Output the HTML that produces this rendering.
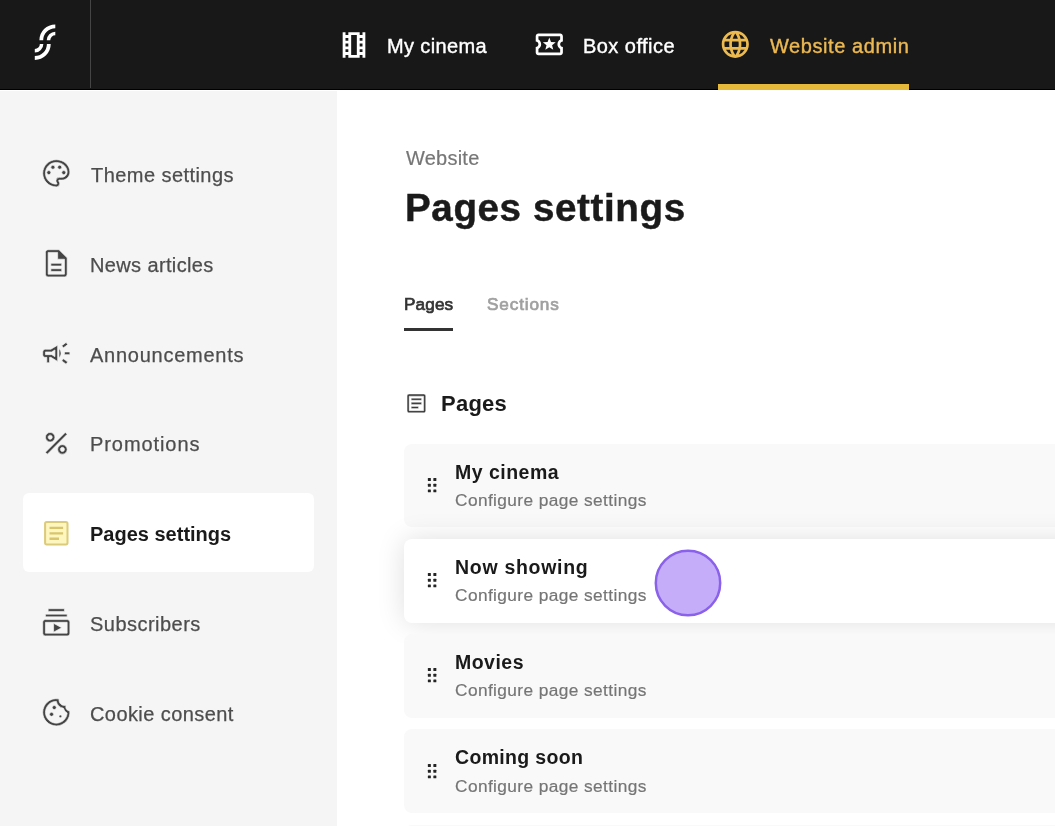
<!DOCTYPE html>
<html lang="en">
<head>
<meta charset="utf-8">
<title>Pages settings</title>
<style>
*{box-sizing:border-box;margin:0;padding:0}
html,body{width:1055px;height:826px;overflow:hidden;background:#fff}
body{position:relative;font-family:"Liberation Sans",sans-serif;color:#1a1a1a}
.t{position:absolute;white-space:nowrap;line-height:1;will-change:transform}
svg{position:absolute;display:block;overflow:visible}
#hdr{position:absolute;left:0;top:0;width:1055px;height:89.7px;background:#181818;border-bottom:1.2px solid #000}
#hdr .div{position:absolute;left:90px;top:0;width:1px;height:88px;background:#454545}
.nav{color:#fff;-webkit-text-stroke:.4px #fff}
.nav.act{color:#ecb852;-webkit-text-stroke:.4px #ecb852}
#uline{position:absolute;left:718px;top:84px;width:191px;height:5.7px;background:#e6b93b}
#side{position:absolute;left:0;top:91px;width:337px;height:735px;background:#f5f5f5}
#actbg{position:absolute;left:22.5px;top:493.1px;width:291.5px;height:79.2px;background:#fff;border-radius:6px}
.sb{color:#4d4d4d;-webkit-text-stroke:.25px #4d4d4d}
.sb.b{font-weight:bold;color:#1a1a1a;-webkit-text-stroke:0}
.crumb{color:#767676;-webkit-text-stroke:.2px #767676}
h1.t{font-weight:bold;color:#1a1a1a;-webkit-text-stroke:.45px #1a1a1a}
.tab{color:#333;-webkit-text-stroke:.7px #333}
.tab.off{color:#a0a0a0;-webkit-text-stroke:.7px #a0a0a0}
#tabline{position:absolute;left:404.3px;top:327.8px;width:48.8px;height:3.1px;background:#333}
h2.t{font-weight:bold;color:#1a1a1a}
.card{position:absolute;left:404.3px;width:700px;height:83.7px;background:#f9f9f9;border-radius:8px}
.card.hov{background:#fff;box-shadow:0 0 28px rgba(0,0,0,.13)}
.ct{font-weight:bold;color:#1a1a1a}
.cs{color:#757575;-webkit-text-stroke:.2px #757575}
</style>
</head>
<body>

<header>
<div id="hdr"><div class="div"></div></div>
<div id="uline"></div>
<svg id="logo" viewBox="30 20 30 45" width="30" height="45" style="left:30px;top:20px" fill="none" stroke="#fff" stroke-width="3.8"><path d="M55.3 26.3A14 14 0 0 0 41.3 40.3"/><path d="M55.3 33.5A6.8 6.8 0 0 0 48.500 40.3" stroke-width="3.5"/><path d="M34.8 58A14 14 0 0 0 48.8 44"/><path d="M34.8 50.8A6.8 6.8 0 0 0 41.6 44" stroke-width="3.5"/></svg>
<svg viewBox="0 0 24 24" width="34" height="34" style="left:336.7px;top:28.05px" fill="#fff"><path d="M18 3v2h-2V3H8v2H6V3H4v18h2v-2h2v2h8v-2h2v2h2V3h-2zM8 17H6v-2h2v2zm0-4H6v-2h2v2zm0-4H6V7h2v2zm6 10h-4V5h4v14zm4-2h-2v-2h2v2zm0-4h-2v-2h2v2zm0-4h-2V7h2v2z"/></svg>
<svg viewBox="0 0 24 24" width="32.6" height="32.6" style="left:532.8px;top:28.2px" fill="#fff"><path d="M22 10V6c0-1.110-.9-2-2-2H4c-1.100 0-1.990.890-1.990 2v4c1.100 0 1.990.9 1.990 2s-.890 2-2 2v4c0 1.100.9 2 2 2h16c1.100 0 2-.9 2-2v-4c-1.100 0-2-.9-2-2s.9-2 2-2zm-2-1.460c-1.190.690-2 1.990-2 3.460s.810 2.770 2 3.460V18H4v-2.540c1.190-.69 2-1.990 2-3.460 0-1.480-.8-2.770-1.990-3.460L4 6h16v2.540zM9.070 16 12 14.120 14.930 16l-.890-3.360 2.690-2.200-3.470-.21L12 7l-1.270 3.220-3.470.21 2.690 2.200z"/></svg>
<svg viewBox="0 0 24 24" width="32.6" height="32.6" style="left:719px;top:27.8px" fill="#edba50"><path d="M11.990 2C6.470 2 2 6.480 2 12s4.470 10 9.990 10C17.520 22 22 17.520 22 12S17.520 2 11.990 2zm6.930 6h-2.950a15.650 15.650 0 0 0-1.380-3.560A8.030 8.030 0 0 1 18.920 8zM12 4.040c.83 1.200 1.480 2.530 1.910 3.960h-3.820c.43-1.430 1.080-2.760 1.910-3.960zM4.260 14C4.100 13.360 4 12.690 4 12s.1-1.360.26-2h3.380c-.08.660-.14 1.320-.14 2 0 .68.060 1.340.14 2H4.260zm.82 2h2.950c.32 1.250.78 2.450 1.380 3.560A7.987 7.987 0 0 1 5.080 16zm2.950-8H5.080a7.987 7.987 0 0 1 4.330-3.560A15.650 15.650 0 0 0 8.030 8zM12 19.960c-.83-1.200-1.480-2.530-1.910-3.960h3.820c-.43 1.430-1.080 2.760-1.910 3.960zM14.340 14H9.660c-.09-.66-.16-1.320-.16-2 0-.68.070-1.350.16-2h4.680c.09.65.16 1.320.16 2 0 .68-.07 1.340-.16 2zm.25 5.560c.6-1.110 1.060-2.310 1.380-3.560h2.950a8.030 8.030 0 0 1-4.330 3.560zM16.360 14c.08-.66.14-1.320.14-2 0-.68-.06-1.340-.14-2h3.380c.16.640.26 1.310.26 2s-.1 1.360-.26 2h-3.380z"/></svg>
<div class="t nav " style="left:387.2px;top:36.07px;font-size:20px;letter-spacing:0.36px">My cinema</div>
<div class="t nav " style="left:583px;top:36.07px;font-size:20px;letter-spacing:0.45px">Box office</div>
<div class="t nav act" style="left:770px;top:36.07px;font-size:20px;letter-spacing:0.58px">Website admin</div>
</header>
<aside>
<div id="side"></div><div id="actbg"></div>
<svg viewBox="0 0 24 24" width="32.6" height="32.6" style="left:40px;top:157.4px" fill="#444" stroke="#f5f5f5" stroke-width="0.5"><path d="M12 22C6.490 22 2 17.510 2 12S6.490 2 12 2s10 4.040 10 9c0 3.310-2.690 6-6 6h-1.770c-.28 0-.5.220-.5.500 0 .120.050.230.130.330.410.470.640 1.060.640 1.670A2.500 2.500 0 0 1 12 22zm0-18c-4.410 0-8 3.590-8 8s3.590 8 8 8c.28 0 .5-.22.5-.5a.54.54 0 0 0-.14-.35c-.41-.46-.63-1.050-.63-1.650a2.500 2.500 0 0 1 2.500-2.500H16c2.210 0 4-1.790 4-4 0-3.860-3.590-7-8-7z"/><circle cx="6.500" cy="11.500" r="1.500"/><circle cx="9.500" cy="7.500" r="1.500"/><circle cx="14.500" cy="7.500" r="1.500"/><circle cx="17.500" cy="11.500" r="1.500"/></svg>
<div class="t sb " style="left:91px;top:165.07px;font-size:20px;letter-spacing:0.44px">Theme settings</div>
<svg viewBox="0 0 24 24" width="32.6" height="32.6" style="left:40px;top:247.16px" fill="#444" stroke="#f5f5f5" stroke-width="0.5"><path d="M8 16h8v2H8zm0-4h8v2H8zm6-10H6c-1.100 0-2 .9-2 2v16c0 1.100.890 2 1.990 2H18c1.100 0 2-.9 2-2V8l-6-6zm4 18H6V4h7v5h5v11z"/></svg>
<div class="t sb " style="left:90px;top:254.83px;font-size:20px;letter-spacing:0.37px">News articles</div>
<svg viewBox="0 0 24 24" width="32.6" height="32.6" style="left:40px;top:336.92px" fill="#444" stroke="#f5f5f5" stroke-width="0.5"><path d="M18 11v2h4v-2h-4zm-2 6.610c.96.710 2.210 1.650 3.200 2.390.4-.53.8-1.070 1.200-1.600-.99-.74-2.240-1.680-3.200-2.400-.4.540-.8 1.080-1.200 1.610zM20.400 5.600c-.4-.53-.8-1.070-1.200-1.600-.99.740-2.240 1.680-3.200 2.400.4.530.8 1.070 1.200 1.600.96-.72 2.210-1.650 3.200-2.400zM4 9c-1.100 0-2 .9-2 2v2c0 1.100.9 2 2 2h1v4h2v-4h1l5 3V6L8 9H4zm5.030 1.710L11 9.530v4.940l-1.970-1.180-.480-.290H4v-2h4.550l.48-.29zM15.500 12c0-1.330-.58-2.530-1.500-3.350v6.690c.92-.81 1.500-2.010 1.500-3.340z"/></svg>
<div class="t sb " style="left:90px;top:344.59px;font-size:20px;letter-spacing:0.75px">Announcements</div>
<svg viewBox="0 0 24 24" width="32.6" height="32.6" style="left:40px;top:426.68px" fill="#444" stroke="#f5f5f5" stroke-width="0.5"><path d="M7.500 4C5.570 4 4 5.570 4 7.500S5.570 11 7.500 11 11 9.430 11 7.500 9.430 4 7.500 4zm0 5C6.670 9 6 8.330 6 7.500S6.670 6 7.500 6 9 6.670 9 7.500 8.330 9 7.500 9zM16.500 13c-1.930 0-3.500 1.570-3.500 3.500s1.570 3.500 3.500 3.500 3.500-1.570 3.500-3.500-1.570-3.500-3.500-3.500zm0 5c-.83 0-1.500-.67-1.500-1.500s.67-1.500 1.500-1.500 1.500.67 1.500 1.500-.67 1.500-1.500 1.500zM5.410 20 4 18.590 18.590 4 20 5.410 5.410 20z"/></svg>
<div class="t sb " style="left:90px;top:434.35px;font-size:20px;letter-spacing:0.92px">Promotions</div>
<svg viewBox="0 0 24 24" width="32.6" height="32.6" style="left:39.5px;top:516.54px" fill="none"><rect x="3.75" y="3.75" width="16.5" height="16.5" rx="1.2" fill="#fdf6bf" stroke="#dccb7a" stroke-width="1.5"/><path d="M7 8h10M7 12h10M7 16h7" fill="none" stroke="#d8c66e" stroke-width="1.7"/></svg>
<div class="t sb b" style="left:89.7px;top:524.11px;font-size:20px">Pages settings</div>
<svg viewBox="0 0 24 24" width="32.6" height="32.6" style="left:40px;top:606.2px" fill="#444" stroke="#f5f5f5" stroke-width="0.5"><path d="M4 6h16v2H4zm2-4h12v2H6zm14 8H4c-1.100 0-2 .9-2 2v8c0 1.100.9 2 2 2h16c1.100 0 2-.9 2-2v-8c0-1.100-.9-2-2-2zm0 10H4v-8h16v8zm-10-7.270v6.530L16 16z"/></svg>
<div class="t sb " style="left:90px;top:613.87px;font-size:20px;letter-spacing:0.47px">Subscribers</div>
<svg viewBox="0 0 24 24" width="32.6" height="32.6" style="left:40px;top:695.96px" fill="#444" stroke="#f5f5f5" stroke-width="0.5"><circle cx="10.500" cy="8.500" r="1.500"/><circle cx="8.500" cy="13.500" r="1.500"/><circle cx="15" cy="15" r="1"/><path d="M21.950 10.990c-1.790-.03-3.700-1.950-2.680-4.220-2.970 1-5.780-1.590-5.190-4.560C7.110.74 2 6.410 2 12c0 5.520 4.480 10 10 10 5.890 0 10.540-5.080 9.950-11.010zM12 20c-4.410 0-8-3.590-8-8 0-3.310 2.730-8.180 8.080-8.020.42 2.540 2.440 4.560 4.990 4.940.7.360.52 2.550 2.920 3.630C19.700 16.860 16.060 20 12 20z"/></svg>
<div class="t sb " style="left:90px;top:703.63px;font-size:20px;letter-spacing:0.42px">Cookie consent</div>
</aside>
<main>
<div class="t crumb" style="left:405.5px;top:147.97px;font-size:20px;letter-spacing:0.23px">Website</div>
<h1 class="t" style="left:405.3px;top:189.33px;font-size:38.6px;letter-spacing:0.6px">Pages settings</h1>
<div class="t tab" style="left:403.6px;top:296.14px;font-size:17.2px;letter-spacing:0.1px">Pages</div>
<div class="t tab off" style="left:487.2px;top:296.14px;font-size:17.2px;letter-spacing:0.85px">Sections</div>
<div id="tabline"></div>
<svg viewBox="0 0 24 24" width="24.8" height="24.8" style="left:404.4px;top:391.35px" fill="#3a3a3a" stroke="#fff" stroke-width="0.4"><path d="M19 5v14H5V5h14m0-2H5c-1.100 0-2 .9-2 2v14c0 1.100.9 2 2 2h14c1.100 0 2-.9 2-2V5c0-1.100-.9-2-2-2z"/><path d="M14 17H7v-2h7v2zm3-4H7v-2h10v2zm0-4H7V7h10v2z"/></svg>
<h2 class="t" style="left:440.6px;top:393.38px;font-size:22px;letter-spacing:0.25px">Pages</h2>
<div class="card" style="top:443.7px"></div>
<div class="card hov" style="top:538.9px"></div>
<div class="card" style="top:634.1px"></div>
<div class="card" style="top:729.3px"></div>
<div class="card" style="top:824.5px"></div>
<svg viewBox="0 0 11 17" width="11" height="17" style="left:427px;top:477px" fill="#242424"><rect x="0.85" y="1.1" width="3" height="2.9" rx=".5"/><rect x="6.35" y="1.1" width="3" height="2.9" rx=".5"/><rect x="0.85" y="6.75" width="3" height="2.9" rx=".5"/><rect x="6.35" y="6.75" width="3" height="2.9" rx=".5"/><rect x="0.85" y="12.4" width="3" height="2.9" rx=".5"/><rect x="6.35" y="12.4" width="3" height="2.9" rx=".5"/></svg>
<div class="t ct" style="left:454.5px;top:462.79px;font-size:19.5px;letter-spacing:0.48px">My cinema</div>
<div class="t cs" style="left:455.4px;top:491.96px;font-size:17.3px;letter-spacing:0.4px">Configure page settings</div>
<svg viewBox="0 0 11 17" width="11" height="17" style="left:427px;top:572.2px" fill="#242424"><rect x="0.85" y="1.1" width="3" height="2.9" rx=".5"/><rect x="6.35" y="1.1" width="3" height="2.9" rx=".5"/><rect x="0.85" y="6.75" width="3" height="2.9" rx=".5"/><rect x="6.35" y="6.75" width="3" height="2.9" rx=".5"/><rect x="0.85" y="12.4" width="3" height="2.9" rx=".5"/><rect x="6.35" y="12.4" width="3" height="2.9" rx=".5"/></svg>
<div class="t ct" style="left:454.5px;top:557.99px;font-size:19.5px;letter-spacing:0.7px">Now showing</div>
<div class="t cs" style="left:455.4px;top:587.16px;font-size:17.3px;letter-spacing:0.4px">Configure page settings</div>
<svg viewBox="0 0 11 17" width="11" height="17" style="left:427px;top:667.4px" fill="#242424"><rect x="0.85" y="1.1" width="3" height="2.9" rx=".5"/><rect x="6.35" y="1.1" width="3" height="2.9" rx=".5"/><rect x="0.85" y="6.75" width="3" height="2.9" rx=".5"/><rect x="6.35" y="6.75" width="3" height="2.9" rx=".5"/><rect x="0.85" y="12.4" width="3" height="2.9" rx=".5"/><rect x="6.35" y="12.4" width="3" height="2.9" rx=".5"/></svg>
<div class="t ct" style="left:454.5px;top:653.19px;font-size:19.5px;letter-spacing:0.48px">Movies</div>
<div class="t cs" style="left:455.4px;top:682.36px;font-size:17.3px;letter-spacing:0.4px">Configure page settings</div>
<svg viewBox="0 0 11 17" width="11" height="17" style="left:427px;top:762.6px" fill="#242424"><rect x="0.85" y="1.1" width="3" height="2.9" rx=".5"/><rect x="6.35" y="1.1" width="3" height="2.9" rx=".5"/><rect x="0.85" y="6.75" width="3" height="2.9" rx=".5"/><rect x="6.35" y="6.75" width="3" height="2.9" rx=".5"/><rect x="0.85" y="12.4" width="3" height="2.9" rx=".5"/><rect x="6.35" y="12.4" width="3" height="2.9" rx=".5"/></svg>
<div class="t ct" style="left:454.5px;top:748.39px;font-size:19.5px;letter-spacing:0.34px">Coming soon</div>
<div class="t cs" style="left:455.4px;top:777.56px;font-size:17.3px;letter-spacing:0.4px">Configure page settings</div>
<svg viewBox="0 0 11 17" width="11" height="17" style="left:427px;top:857.8px" fill="#242424"><rect x="0.85" y="1.1" width="3" height="2.9" rx=".5"/><rect x="6.35" y="1.1" width="3" height="2.9" rx=".5"/><rect x="0.85" y="6.75" width="3" height="2.9" rx=".5"/><rect x="6.35" y="6.75" width="3" height="2.9" rx=".5"/><rect x="0.85" y="12.4" width="3" height="2.9" rx=".5"/><rect x="6.35" y="12.4" width="3" height="2.9" rx=".5"/></svg>
<div class="t ct" style="left:454.5px;top:843.59px;font-size:19.5px;letter-spacing:0.48px">Events</div>
<div class="t cs" style="left:455.4px;top:872.76px;font-size:17.3px;letter-spacing:0.4px">Configure page settings</div>
<svg id="click" viewBox="0 0 70 70" width="70" height="70" style="left:653.2px;top:547.8px"><circle cx="35" cy="35" r="32.2" fill="#c5adfa" stroke="#8a61ea" stroke-width="2.5"/></svg>
</main>
</body>
</html>
